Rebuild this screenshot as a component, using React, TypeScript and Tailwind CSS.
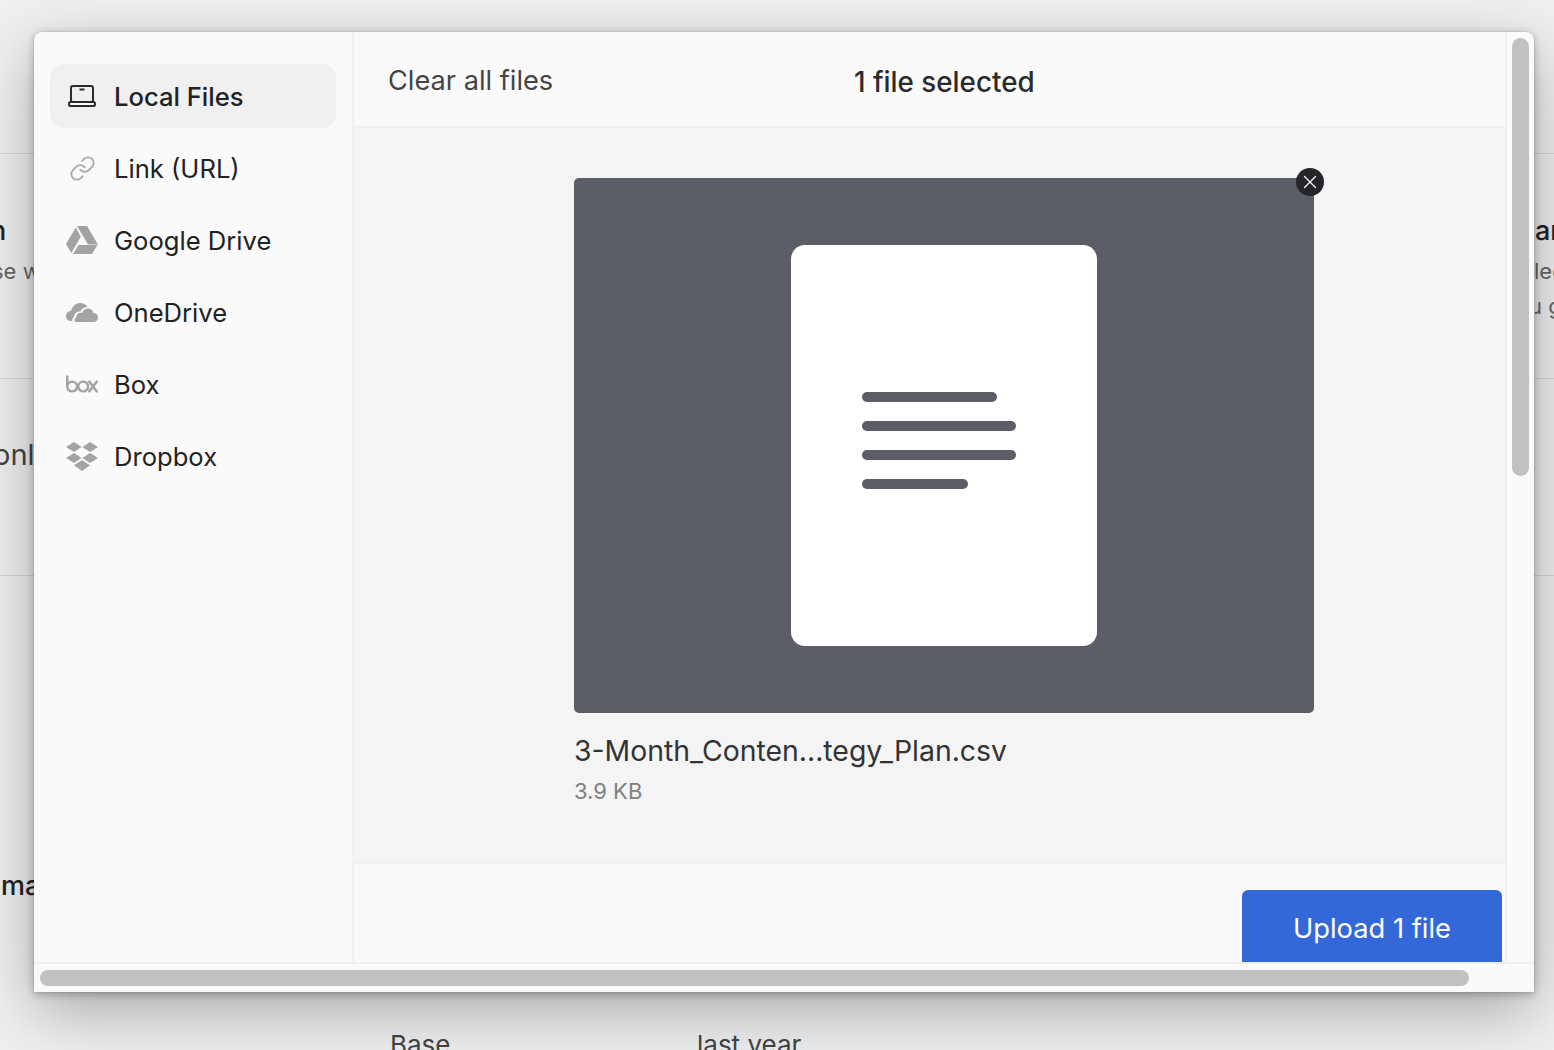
import React from "react";
import { Link as LinkIcon, X } from "lucide-react";
import { SiBox } from "react-icons/si";

const LaptopIcon = () => (
  <svg width="28" height="22" viewBox="0 0 28 22" fill="none" stroke="#2b2b2b" strokeWidth="2">
    <rect x="3" y="1" width="22" height="16" rx="2" />
    <rect x="1" y="17" width="26" height="4" rx="1.5" fill="#fafafa" />
    <path d="M11.5 4.5h5" strokeWidth="2" />
  </svg>
);

const DriveIcon = () => (
  <svg width="32" height="28" viewBox="0 0 32 28" fill="#a3a3a3">
    <path d="M11 0h10l11 18.5h-10z" />
    <path d="M9.8 1.5l5 9L5.5 27 0 18z" />
    <path d="M12.5 19h19L26 28H7z" />
  </svg>
);

const OneDriveIcon = () => (
  <svg width="32" height="21" viewBox="0 0 32 21" fill="#a3a3a3">
    <path d="M5 19C2 19 0 17 0 14c0-3 2.5-5 5-5 1-5 5-8 9-8 3 0 6 1.5 7.500 4-3.500 0-6 1.500-7 4.500C11 9 8 11.500 8 15c-1.500.5-2 2.500-1.500 4z" />
    <path d="M10 20c-2 0-2-3.500 0-4 0-4 3-6 6-5 1-3.500 4-5 7-4.500 2.500.5 4 2.500 4.500 4.500 2.500 0 4.500 2 4.500 4.500S30 20 27.500 20z" />
  </svg>
);

const DropboxIcon = () => (
  <svg width="32" height="29" viewBox="0 0 32 29" fill="#a3a3a3">
    <path d="M8 0l7.600 5-7.600 5-8-5z" />
    <path d="M24 0l8 5-8 5-7.600-5z" />
    <path d="M8 11l7.600 5-7.600 5-8-5z" />
    <path d="M24 11l8 5-8 5-7.600-5z" />
    <path d="M16 18l8 5.200-8 5.800-8-5.800z" />
  </svg>
);

const items = [
  { label: "Local Files", icon: <LaptopIcon />, active: true },
  { label: "Link (URL)", icon: <LinkIcon size={27} color="#a8a8a8" strokeWidth={1.6} /> },
  { label: "Google Drive", icon: <DriveIcon /> },
  { label: "OneDrive", icon: <OneDriveIcon /> },
  { label: "Box", icon: <SiBox size={32} color="#a3a3a3" /> },
  { label: "Dropbox", icon: <DropboxIcon /> },
];

export default function App() {
  return (
    <div className="relative h-[1050px] overflow-hidden bg-[#eef0f1] font-['Inter',sans-serif] text-[#222]">
      {/* page behind the dialog */}
      <div className="flex flex-col">
        <div className="h-[154px] border-b border-[#d6d8d9]" />
        <div className="flex h-[225px] justify-between border-b border-[#d6d8d9] pt-[60px]">
          <div className="-ml-[10px] whitespace-nowrap">
            <div className="text-[27px] leading-[34px] font-medium">n</div>
            <div className="mt-[9px] ml-[2px] text-[22px] leading-[28px] text-[#666]">se w</div>
          </div>
          <div className="w-[19px] overflow-hidden whitespace-nowrap">
            <div className="text-[27px] leading-[34px] font-medium">ar</div>
            <div className="mt-[9px] -ml-[1px] text-[22px] leading-[28px] text-[#666]">lec</div>
            <div className="mt-[7px] -ml-[6px] text-[22px] leading-[28px] text-[#666]">u g</div>
          </div>
        </div>
        <div className="h-[197px] border-b border-[#d6d8d9] pt-[58px]">
          <div className="-ml-[7px] text-[29px] leading-[36px] whitespace-nowrap text-[#444]">only</div>
        </div>
        <div className="pt-[293px]">
          <div className="ml-[1px] text-[27px] leading-[34px] font-medium">ma</div>
        </div>
        <div className="mt-[126px] flex pl-[390px] text-[26px] leading-[32px] text-[#444]">
          <span className="w-[307px]">Base</span>
          <span>last year</span>
        </div>
      </div>

      {/* dialog */}
      <div className="absolute top-[32px] left-[34px] flex h-[960px] w-[1500px] flex-col overflow-hidden rounded-t-lg bg-[#fafafa] shadow-[0_0_0_1px_rgba(0,0,0,0.04),0_2px_8px_rgba(0,0,0,0.28),0_20px_64px_rgba(0,0,0,0.3)]">
        <div className="flex min-h-0 flex-1">
          <aside className="flex w-[320px] shrink-0 flex-col gap-2 border-r-2 border-[#f1f1f1] px-4 pt-8">
            {items.map((item) => (
              <div
                key={item.label}
                className={`flex h-[64px] w-[286px] items-center rounded-[14px] ${item.active ? "bg-[#f0f0f0] font-medium" : ""}`}
              >
                <span className="flex w-[64px] shrink-0 justify-center">{item.icon}</span>
                <span className="translate-y-[1px] text-[25.6px] leading-none text-[#222]">{item.label}</span>
              </div>
            ))}
          </aside>

          <main className="flex min-w-0 flex-1 flex-col">
            <header className="flex h-[96px] shrink-0 items-center border-b-2 border-[#f0f0f0] pl-[34px]">
              <span className="w-[466px] translate-y-[2px] text-[27.2px] text-[#444]">Clear all files</span>
              <span className="translate-y-[4px] text-[27.8px] font-[450] text-[#2b2b2b]">1 file selected</span>
            </header>

            <div className="h-[734px] shrink-0 bg-[#f4f4f4] pt-[50px] pl-[220px]">
              <div className="relative flex h-[535px] w-[740px] items-center justify-center rounded-[5px] bg-[#5b5d67]">
                <div className="flex h-[401px] w-[306px] flex-col gap-[19px] rounded-[14px] bg-white pt-[147px] pl-[71px]">
                  <div className="h-[10px] w-[135px] rounded-full bg-[#5b5d67]" />
                  <div className="h-[10px] w-[154px] rounded-full bg-[#5b5d67]" />
                  <div className="h-[10px] w-[154px] rounded-full bg-[#5b5d67]" />
                  <div className="h-[10px] w-[106px] rounded-full bg-[#5b5d67]" />
                </div>
                <div className="absolute -top-[10px] -right-[10px] flex h-[28px] w-[28px] items-center justify-center rounded-full bg-[#25262a]">
                  <X size={22} color="white" strokeWidth={1.3} />
                </div>
              </div>
              <div className="mt-[21px] text-[28.4px] leading-[34px] text-[#333]">3-Month_Conten...tegy_Plan.csv</div>
              <div className="mt-[9px] text-[22px] leading-[28px] text-[#808080]">3.9 KB</div>
            </div>

            <footer className="flex flex-1 justify-end overflow-hidden border-t-2 border-[#f0f0f0] pt-[26px] pr-[3px]">
              <button className="flex h-[80px] w-[260px] justify-center rounded-[6px] bg-[#3468d9] pt-[22px] text-[27.3px] leading-[34px] text-white">
                Upload 1 file
              </button>
            </footer>
          </main>

          <div className="w-[29px] shrink-0 border-l-2 border-[#efefef] pt-[6px] pl-[5px]">
            <div className="h-[438px] w-[17px] rounded-full bg-[#c1c1c1]" />
          </div>
        </div>

        <div className="h-[30px] shrink-0 border-t-2 border-[#efefef] pt-[6px] pl-[6px]">
          <div className="h-[16px] w-[1429px] rounded-full bg-[#c1c1c1]" />
        </div>
      </div>
    </div>
  );
}
